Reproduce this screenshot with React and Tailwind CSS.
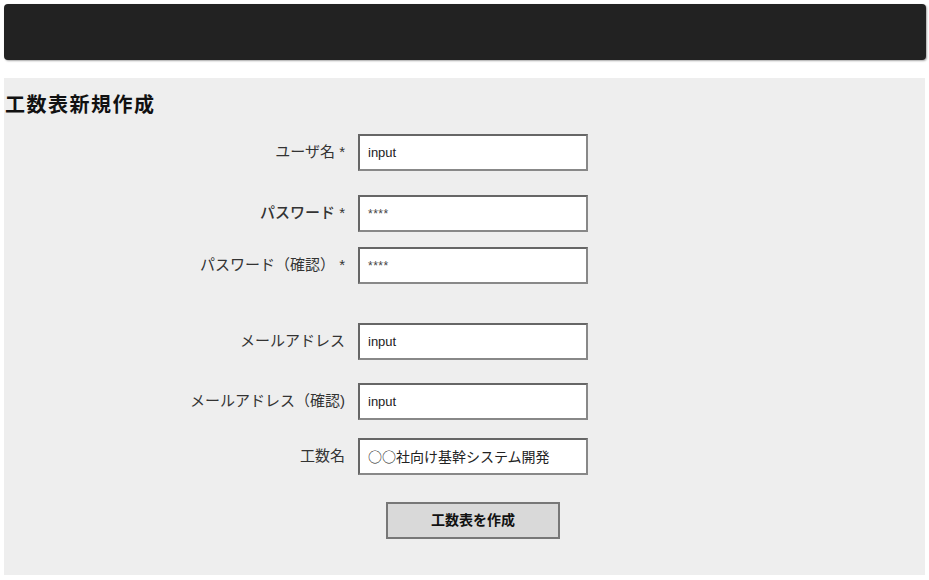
import React from "react";

const font = { fontFamily: '"Liberation Sans", "Noto Sans CJK JP", sans-serif' };
const cjk = { fontFamily: '"Noto Sans CJK JP", "Liberation Sans", sans-serif' };

function Row({ label, value, mt, small, cjkValue, labelClass = "" }) {
  return (
    <div className="flex items-center" style={{ marginTop: mt }}>
      <div className={`w-[341px] shrink-0 whitespace-nowrap text-right text-[15px] text-[#333] ${labelClass}`}>{label}</div>
      <div className="ml-[13px] flex h-[37px] w-[230px] items-center border-2 border-t-[#666] border-l-[#666] border-r-[#888] border-b-[#888] bg-white pl-[8px]">
        {cjkValue ? (
          <span className="text-[14px] text-[#222]" style={cjk}>{value}</span>
        ) : (
          <span className={small ? "text-[12px] tracking-[0.5px] text-[#444]" : "text-[13px] text-[#222]"}>{value}</span>
        )}
      </div>
    </div>
  );
}

export default function App() {
  return (
    <div className="min-h-[580px] bg-white p-[4px]" style={font}>
      <div className="h-[56px] w-[922px] rounded-[4px] bg-[#222222] shadow-[1px_1px_2px_rgba(0,0,0,0.35)]" />
      <div className="mt-[18px] h-[497px] w-[921px] bg-[#eeeeee] pt-[14px]">
        <h1 className="ml-[1px] text-[20px] font-bold leading-[26px] tracking-[1.5px] text-[#111]">工数表新規作成</h1>
        <Row label="ユーザ名 *" value="input" mt={16} />
        <Row label="パスワード *" value="****" small mt={24} labelClass="text-[#111] font-medium" />
        <Row label="パスワード（確認） *" value="****" small mt={15} />
        <Row label="メールアドレス" value="input" mt={39} />
        <Row label="メールアドレス（確認)" value="input" mt={23} />
        <Row label="工数名" value="○○社向け基幹システム開発" cjkValue mt={18} />
        <div className="mt-[27px] flex">
          <button className="ml-[382px] h-[37px] w-[174px] border-2 border-[#777] bg-[#d9d9d9] text-[14px] font-bold text-[#111]">
            工数表を作成
          </button>
        </div>
      </div>
    </div>
  );
}
